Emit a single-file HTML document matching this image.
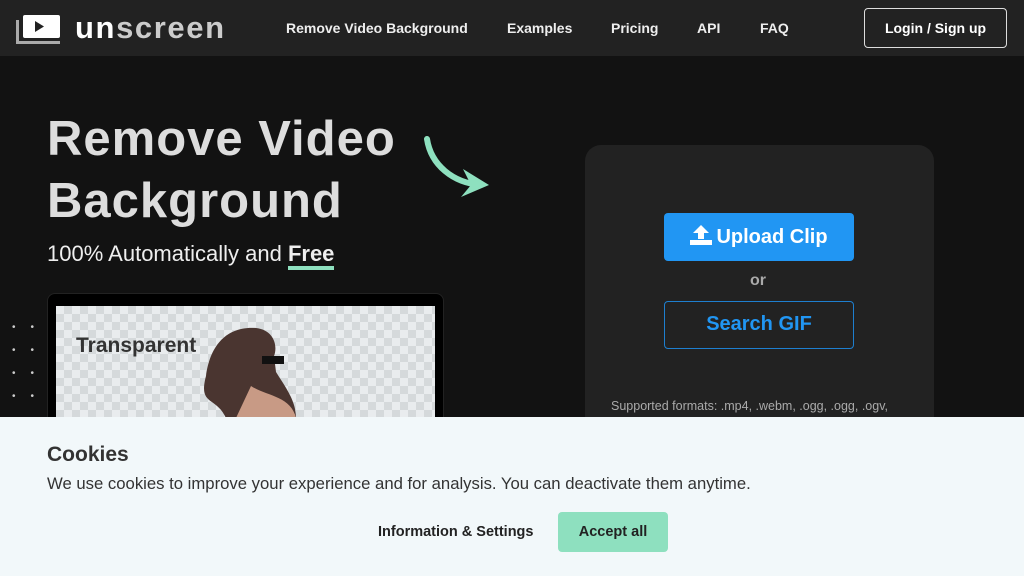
<!DOCTYPE html>
<html><head><style>
*{margin:0;padding:0;box-sizing:border-box}
body{width:1024px;height:576px;overflow:hidden;background:#121212;font-family:"Liberation Sans",sans-serif;position:relative}
.nav{position:absolute;left:0;top:0;width:1024px;height:56px;background:#222;}
.nav a{position:absolute;top:20px;color:#eee;font-size:14px;font-weight:bold;}
.logo{position:absolute;left:75px;top:10px;font-size:31px;font-weight:bold;color:#ccc;letter-spacing:1.6px}
.logo b{color:#fff}
.login{position:absolute;left:864px;top:8px;width:143px;height:40px;border:1px solid #ddd;border-radius:4px;color:#fff;font-size:14px;font-weight:bold;text-align:center;line-height:38px}
h1{position:absolute;left:47px;top:108px;color:#ddd;font-size:49px;line-height:62px;font-weight:bold;letter-spacing:1px}
.sub{position:absolute;left:47px;top:241px;color:#eee;font-size:22px}
.sub b{border-bottom:4px solid #8ee0bf;padding-bottom:0px}
.laptop{position:absolute;left:47px;top:293px;width:397px;height:140px;background:#000;border-radius:8px;border:1px solid #222}
.screen{position:absolute;left:56px;top:306px;width:379px;height:120px;background-color:#e9ecee;background-image:linear-gradient(45deg,#d5d9db 25%,transparent 25%,transparent 75%,#d5d9db 75%),linear-gradient(45deg,#d5d9db 25%,transparent 25%,transparent 75%,#d5d9db 75%);background-size:16px 16px;background-position:0 0,8px 8px}
.card{position:absolute;left:585px;top:145px;width:349px;height:300px;background:#222;border-radius:16px}
.up{position:absolute;left:664px;top:213px;width:190px;height:48px;background:#2196f3;border-radius:4px;color:#fff;font-size:20px;font-weight:bold;text-align:center;line-height:48px}
.gif{position:absolute;left:664px;top:301px;width:190px;height:48px;border:1.5px solid #1e7fcf;border-radius:4px;color:#2196f3;font-size:20px;font-weight:bold;text-align:center;line-height:45px}
.or{position:absolute;left:750px;top:272px;color:#aaa;font-size:16px;font-weight:bold}
.fmt{position:absolute;left:611px;top:399px;color:#aaa;font-size:12.5px}
.cookie{position:absolute;left:0;top:417px;width:1024px;height:159px;background:#f2f8fa}
.cookie h2{position:absolute;left:47px;top:26px;font-size:21px;color:#333}
.cookie p{position:absolute;left:47px;top:57px;font-size:16.7px;color:#333}
.info{position:absolute;left:378px;top:107px;font-size:14.5px;font-weight:bold;color:#222}
.acc{position:absolute;left:558px;top:95px;width:110px;height:40px;background:#8ee0bf;border-radius:4px;font-size:14.5px;font-weight:bold;color:#222;text-align:center;line-height:40px}
.dots{position:absolute;left:12px;color:#ccc;font-size:10px;letter-spacing:15px}
</style></head><body>
<div class="nav">
<svg style="position:absolute;left:16px;top:14px" width="46" height="30" viewBox="0 0 46 30"><path d="M1.5 6 V28.5 H44" stroke="#aaa" stroke-width="3" fill="none"/><rect x="7" y="1" width="37" height="23" rx="2" fill="#fff"/><path d="M19 7 L28 12.5 L19 18Z" fill="#222"/></svg>
<div class="logo"><b>un</b>screen</div>
<a style="left:286px">Remove Video Background</a>
<a style="left:507px">Examples</a>
<a style="left:611px">Pricing</a>
<a style="left:697px">API</a>
<a style="left:760px">FAQ</a>
<div class="login">Login / Sign up</div>
</div>
<h1>Remove Video<br>Background</h1>
<svg style="position:absolute;left:423px;top:135px" width="70" height="66" viewBox="0 0 70 66"><path d="M4 4 C8 30 30 48 58 50" stroke="#8ee0bf" stroke-width="6" fill="none" stroke-linecap="round"/><path d="M40 34 L66 50 L38 62 L48 50Z" fill="#8ee0bf"/></svg>
<div class="sub">100% Automatically and <b>Free</b></div>
<div class="dots" style="top:322px">••</div>
<div class="dots" style="top:345px">••</div>
<div class="dots" style="top:368px">••</div>
<div class="dots" style="top:391px">••</div>
<div class="laptop"></div>
<div class="screen"></div>
<div style="position:absolute;left:76px;top:334px;font-size:21px;font-weight:bold;color:#333">Transparent</div>
<svg style="position:absolute;left:196px;top:326px" width="100" height="92" viewBox="0 0 100 92"><path d="M30 92 C20 70 2 80 10 50 C14 20 30 0 60 2 C78 4 82 20 78 30 L80 46 C90 62 100 75 100 92Z" fill="#4a3530"/><path d="M55 60 C70 70 95 70 100 92 H40Z" fill="#c89a85"/><path d="M66 30 H88 V38 H66Z" fill="#111"/></svg>
<div class="card"></div>
<div class="up"><svg width="22" height="20" viewBox="0 0 22 20" style="vertical-align:-2px;margin-right:4px"><path d="M11 0 L19 8 H14 V14 H8 V8 H3Z" fill="#fff"/><rect x="0" y="15" width="22" height="5" fill="#fff"/></svg>Upload Clip</div>
<div class="or">or</div>
<div class="gif">Search GIF</div>
<div class="fmt">Supported formats: .mp4, .webm, .ogg, .ogg, .ogv,</div>
<div class="cookie">
<h2>Cookies</h2>
<p>We use cookies to improve your experience and for analysis. You can deactivate them anytime.</p>
<div class="info">Information &amp; Settings</div>
<div class="acc">Accept all</div>
</div>
</body></html>
